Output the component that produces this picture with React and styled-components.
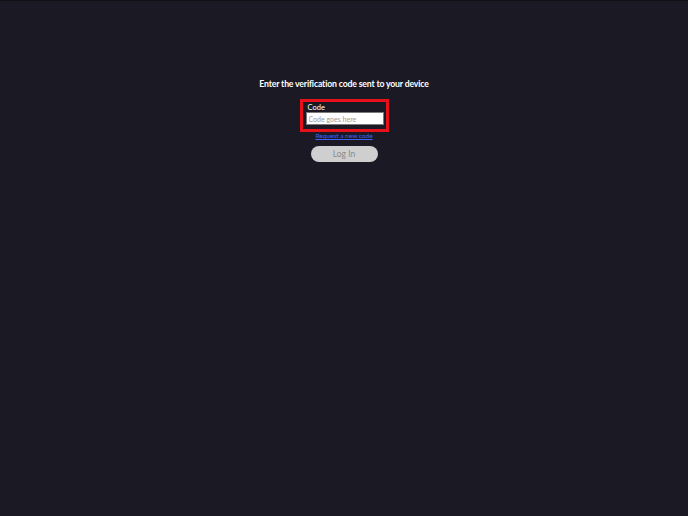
import React from "react";
import styled, { createGlobalStyle } from "styled-components";

const Global = createGlobalStyle`
  html, body { margin: 0; padding: 0; background: #1b1a24; }
  body { min-height: 516px; border-top: 1px solid #0f0f14; box-sizing: border-box; }
`;

const Page = styled.main`
  display: flex;
  flex-direction: column;
  align-items: center;
  padding-top: 76px;
  font-family: Lato, "Open Sans", sans-serif;
  color: #ffffff;
`;

const Title = styled.h1`
  margin: 0;
  font-size: 8.7px;
  font-weight: 700;
  line-height: 13px;
  letter-spacing: -0.17px;
`;

const Highlight = styled.div`
  margin-top: 9px;
  border: 3px solid #e8101a;
  padding: 1px 2px 4px 3px;
  display: flex;
  flex-direction: column;
`;

const Label = styled.label`
  font-size: 7.5px;
  line-height: 9px;
  padding-left: 2px;
  color: #ffffff;
`;

const Input = styled.input`
  box-sizing: border-box;
  width: 78px;
  height: 13px;
  margin: 0;
  padding: 0 2px;
  border: 1px solid #7a7a7a;
  background: #ffffff;
  font-family: Lato, "Open Sans", sans-serif;
  font-size: 7px;
  outline: none;
  &::placeholder { color: #9a9a9a; }
`;

const Link = styled.a`
  margin-top: 0;
  font-size: 6.5px;
  line-height: 8px;
  color: #4262ff;
  text-decoration: underline;
`;

const Button = styled.button`
  margin-top: 6px;
  width: 67px;
  height: 16px;
  border: none;
  border-radius: 8px;
  background: #cfcfcf;
  color: #8a8a8a;
  font-family: Lato, "Open Sans", sans-serif;
  font-size: 8.5px;
  padding: 0;
`;

export default function App() {
  return (
    <>
      <Global />
      <Page>
        <Title>Enter the verification code sent to your device</Title>
        <Highlight>
          <Label htmlFor="code">Code</Label>
          <Input id="code" placeholder="Code goes here" />
        </Highlight>
        <Link href="#">Request a new code</Link>
        <Button disabled>Log In</Button>
      </Page>
    </>
  );
}
